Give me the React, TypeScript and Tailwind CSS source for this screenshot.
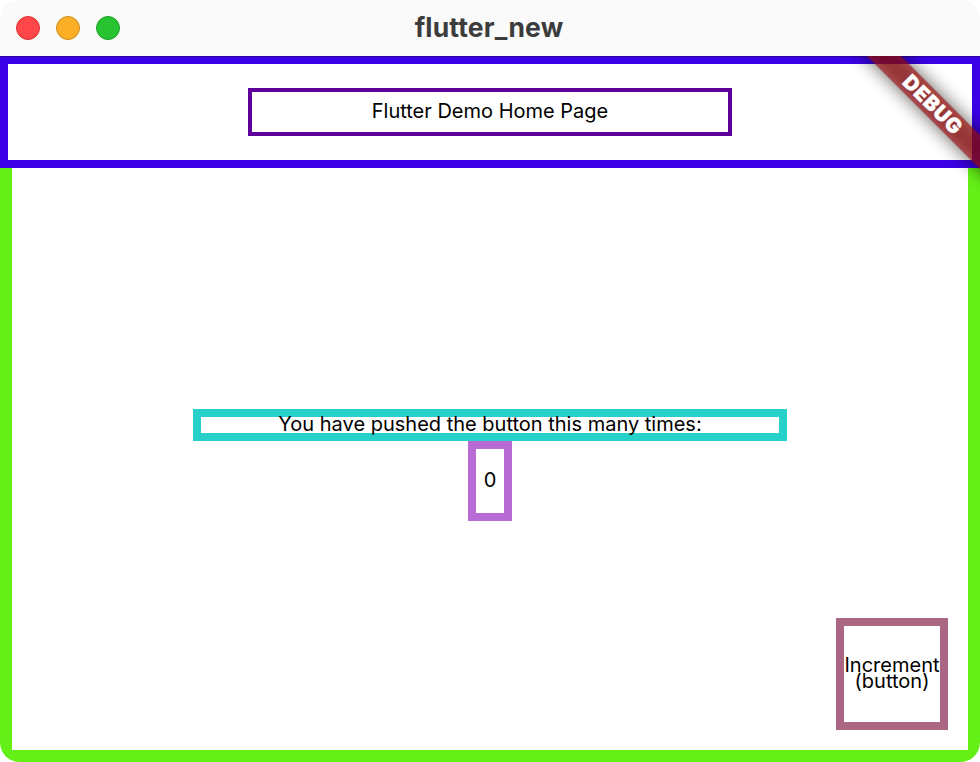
const TRAFFIC_LIGHTS = [
  "bg-[#ff4648] border-[#d9302f]",
  "bg-[#fdb026] border-[#cf8d1f]",
  "bg-[#29c231] border-[#1a9f24]",
];

function TitleBar() {
  return (
    <header className="grid h-14 shrink-0 grid-cols-[1fr_auto_1fr] items-center bg-[#fafafa] px-4">
      <div className="flex gap-4">
        {TRAFFIC_LIGHTS.map((tone) => (
          <span key={tone} className={`size-6 rounded-full border ${tone}`} />
        ))}
      </div>
      <h1 className="-mt-[3px] pr-[2px] text-[26.5px] leading-8 font-bold tracking-[0.16px] text-[#3c3c3c]">flutter_new</h1>
    </header>
  );
}

function DebugRibbon() {
  return (
    <div className="pointer-events-none absolute inset-0 overflow-hidden">
      <div className="absolute -right-12 top-9 h-6 w-48 rotate-45 bg-black/62 blur-[9px]" />
      <div className="absolute -right-8 top-9 flex h-6 w-40 rotate-45 items-center justify-center bg-[#a50c0c]/63 pl-[2px] text-[20.4px] leading-none font-black tracking-[0.8px] text-white [-webkit-text-stroke:0.4px_white]">
        DEBUG
      </div>
    </div>
  );
}

export default function App() {
  return (
    <div className="flex h-[762px] w-[980px] flex-col overflow-hidden rounded-[20px] bg-white font-['Inter',sans-serif] text-black">
      <TitleBar />
      <div className="relative flex flex-1 flex-col text-[20px]">
        <div className="flex h-28 shrink-0 items-center justify-center border-8 border-[#3b00e6]">
          <div className="flex h-12 w-[484px] items-center justify-center border-4 border-[#5c0099] pb-0.5 leading-6">
            <span>Flutter Demo Home Page</span>
          </div>
        </div>
        <main className="flex flex-1 flex-col items-center border-x-12 border-b-12 border-[#64f016] pt-[241px]">
          <div className="flex h-8 w-[594px] items-center justify-center border-8 border-[#27d0c9] pb-0.5 leading-4">
            <span>You have pushed the button this many times:</span>
          </div>
          <div className="flex h-20 w-11 items-center justify-center border-8 border-[#b86bd4] pb-0.5">0</div>
          <button className="mt-auto mr-5 mb-5 flex size-28 flex-col items-center justify-center self-end border-8 border-[#ab6683] pb-0.5 leading-4">
            <span>Increment</span>
            <span>(button)</span>
          </button>
        </main>
        <div className="absolute inset-x-0 top-0 h-px bg-black/30" />
        <DebugRibbon />
      </div>
    </div>
  );
}
